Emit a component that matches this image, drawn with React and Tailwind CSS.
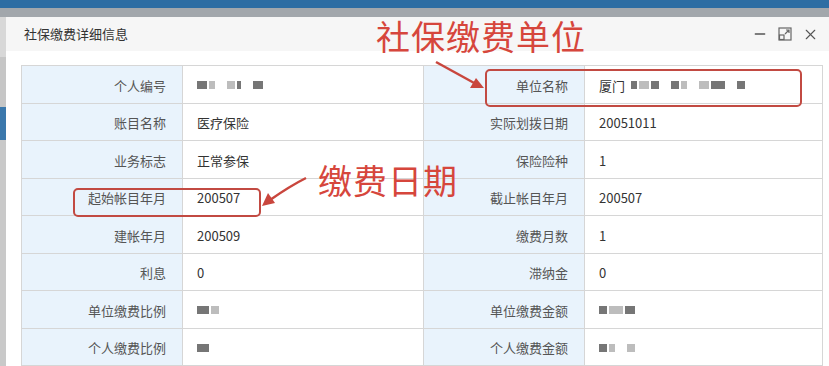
import { Minus, X } from "lucide-react";

const rows = [
  ["个人编号", { blur: [10, 6, 0, 8, 4, 0, 10] }, "单位名称", { text: "厦门", blur: [6, 10, 8, 0, 8, 6, 0, 10, 14, 0, 8] }],
  ["账目名称", "医疗保险", "实际划拨日期", "20051011"],
  ["业务标志", "正常参保", "保险险种", "1"],
  ["起始帐目年月", "200507", "截止帐目年月", "200507"],
  ["建帐年月", "200509", "缴费月数", "1"],
  ["利息", "0", "滞纳金", "0"],
  ["单位缴费比例", { blur: [12, 8] }, "单位缴费金额", { blur: [8, 14, 10] }],
  ["个人缴费比例", { blur: [12] }, "个人缴费金额", { blur: [8, 6, 0, 8] }],
];

const Blurred = ({ value }) => (
  <span className="flex items-center gap-[2px]">
    {value.text && <span className="mr-[4px]">{value.text}</span>}
    {value.blur.map((w, i) =>
      w === 0 ? (
        <span key={i} className="w-[8px]" />
      ) : (
        <span
          key={i}
          className={`h-[8px] blur-[0.7px] ${i % 2 ? "bg-[#bdbdbd]" : "bg-[#767676]"}`}
          style={{ width: w }}
        />
      )
    )}
  </span>
);

const Cell = ({ value }) => (
  <div className="flex items-center border-b border-l border-[#d6d6d6] bg-white pl-[14px] pt-[2px] text-[13px] text-[#333]">
    {typeof value === "string" ? value : <Blurred value={value} />}
  </div>
);

const Label = ({ text }) => (
  <div className="flex items-center justify-end border-b border-l border-[#d6d6d6] bg-[#e9f3fc] pr-[16px] pt-[2px] text-[13px] text-[#555]">
    {text}
  </div>
);

export default function App() {
  return (
    <div
      className="relative h-[366px] w-[829px] overflow-hidden bg-[#b5b8bb]"
      style={{ fontFamily: '"Noto Sans CJK SC", "Noto Sans", sans-serif' }}
    >
      <div className="h-[8px] bg-[#2d6da3]" />
      <div className="h-[9px] bg-[#a2a7ac]" />
      <div className="flex h-[349px]">
        <div className="flex w-[6px] flex-col">
          <div className="h-[40px] bg-[#d8d8d8]" />
          <div className="h-[50px] bg-[#c6c6c6]" />
          <div className="h-[33px] bg-[#3b78ac]" />
          <div className="flex-1 bg-[#c9c9c9]" />
        </div>
        <div className="flex flex-1 flex-col bg-white">
          <div className="flex h-[41px] items-center justify-between bg-[#f6f6f6] pl-[18px] pr-[10px]">
            <span className="text-[13px] text-[#333]">社保缴费详细信息</span>
            <div className="flex items-center gap-[10px] text-[#555]">
              <Minus size={16} strokeWidth={2.2} />
              <svg width="14" height="14" viewBox="0 0 14 14" fill="none" stroke="#666" strokeWidth="1.2">
                <rect x="1" y="1" width="12" height="12" />
                <rect x="1.5" y="8" width="4.5" height="4.5" />
                <path d="M7 7 L11 3 M8 3 H11 V6" />
              </svg>
              <X size={17} strokeWidth={1.6} />
            </div>
          </div>
          <div className="pl-[15px] pr-[6px] pt-[14px]">
            <div className="grid grid-cols-[161px_241px_161px_1fr] border-r border-t border-[#d6d6d6] [grid-auto-rows:37.5px]">
              {rows.map((r, i) => (
                <div key={i} className="contents">
                  <Label text={r[0]} />
                  <Cell value={r[1]} />
                  <Label text={r[2]} />
                  <Cell value={r[3]} />
                </div>
              ))}
            </div>
          </div>
        </div>
      </div>

      {/* annotations */}
      <div className="absolute left-[376px] top-[14px] text-[34px] leading-[44px] tracking-[1px] text-[#d6463c]">
        社保缴费单位
      </div>
      <div className="absolute left-[318px] top-[158px] text-[34px] leading-[44px] tracking-[1px] text-[#d6463c]">
        缴费日期
      </div>
      <div className="absolute left-[485px] top-[69px] h-[38px] w-[317px] rounded-[5px] border-2 border-[#c24a42]" />
      <div className="absolute left-[73px] top-[188px] h-[29px] w-[188px] rounded-[5px] border-2 border-[#c24a42]" />
      <svg className="pointer-events-none absolute left-0 top-0" width="829" height="366">
        <path d="M436 62 L476 84" stroke="#c9463d" strokeWidth="2.5" />
        <path d="M484 88 L470 88 L476 78 Z" fill="#c9463d" />
        <path d="M306 178 Q290 186 270 200" stroke="#c9463d" strokeWidth="2.5" fill="none" />
        <path d="M262 206 L268 193 L275 203 Z" fill="#c9463d" />
      </svg>
    </div>
  );
}
